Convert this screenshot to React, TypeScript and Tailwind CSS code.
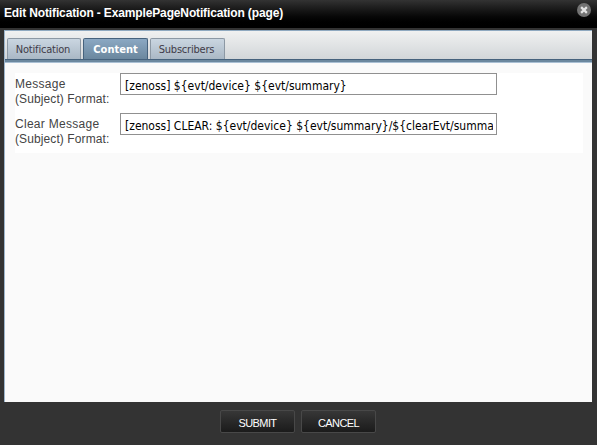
const tahoma = "font-['DejaVu_Sans_Condensed','DejaVu_Sans',sans-serif] [font-stretch:condensed]";

function Tab({ label, active = false, className }: { label: string; active?: boolean; className: string }) {
  return (
    <button
      role="tab"
      aria-selected={active}
      className={`${tahoma} flex h-[21px] items-center justify-center whitespace-nowrap rounded-t-[2px] border border-b-0 pt-px text-[11px] leading-none ${
        active
          ? "border-[#46627d] bg-linear-to-b from-[#8ba8c3] to-[#6b879e] font-bold text-white"
          : "border-[#8c98a4] bg-linear-to-b from-[#cad6e1] to-[#aab8c5] pr-[2px] tracking-[-0.2px] text-[#3f3b48]"
      } ${className}`}
    >
      {label}
    </button>
  );
}

function Field({ lines, value }: { lines: [string, string]; value: string }) {
  return (
    <label className="flex h-10 items-start">
      <span className="w-[105px] shrink-0 pt-[4px] text-[12px] leading-[15px] whitespace-nowrap text-[#444]">
        <span className="block tracking-[0.28px]">{lines[0]}</span>
        <span className="block tracking-[0.1px]">{lines[1]}</span>
      </span>
      <input
        defaultValue={value}
        className={`${tahoma} h-[22px] w-[377px] border border-[#909090] bg-white pt-[3px] pr-[3px] pl-1 text-[12px] text-black outline-none`}
      />
    </label>
  );
}

function DialogButton({ label, className }: { label: string; className: string }) {
  return (
    <button
      className={`flex h-[23px] items-center justify-center rounded-[2px] border border-[#484848] bg-linear-to-b from-[#373737] to-[#1b1b1b] pt-[4px] text-[11px] leading-none tracking-[-0.6px] text-white ${className}`}
    >
      {label}
    </button>
  );
}

export default function App() {
  return (
    <div className="flex h-[445px] w-[597px] flex-col overflow-hidden bg-[#333] font-['Liberation_Sans',Arial,sans-serif]">
      <header className="flex h-[28px] shrink-0 items-start justify-between bg-linear-to-b from-[#333] to-black pl-1 pr-[6px]">
        <h1 className="pt-[6px] text-[12px] leading-[15px] font-bold tracking-[-0.14px] whitespace-nowrap text-white">
          Edit Notification - ExamplePageNotification (page)
        </h1>
        <button aria-label="Close" className="mt-[3px]">
          <svg width="14" height="14" viewBox="0 0 14 14">
            <circle cx="7" cy="7" r="7" fill="#737373" />
            <path d="M4.9 4.9 9.1 9.1M9.1 4.9 4.9 9.1" stroke="#e4e4e4" strokeWidth="2.2" strokeLinecap="square" />
          </svg>
        </button>
      </header>
      <main className="mt-[2px] ml-1 flex h-[372px] w-[588px] shrink-0 flex-col border-t border-l border-t-[#8fa9c0] border-l-[#9cb5cc] bg-[#fafafa]">
        <div role="tablist" className="flex h-[28px] shrink-0 items-end gap-[2px] bg-linear-to-b from-[#f0f1f1] to-[#d2d6d9] pl-[2px]">
          <Tab label="Notification" className="w-[74px]" />
          <Tab label="Content" active className="w-[65px]" />
          <Tab label="Subscribers" className="w-[75px]" />
        </div>
        <div className="h-[4px] shrink-0 border-t border-b border-t-[#46627d] border-b-[#a9bfd3] bg-[#6b879e]" />
        <section className="mt-[10px] ml-[10px] h-20 w-[568px] bg-white">
          <Field lines={["Message", "(Subject) Format:"]} value="[zenoss] ${evt/device} ${evt/summary}" />
          <Field
            lines={["Clear Message", "(Subject) Format:"]}
            value="[zenoss] CLEAR: ${evt/device} ${evt/summary}/${clearEvt/summary}"
          />
        </section>
      </main>
      <footer className="flex gap-[6px] pt-[8px] pl-[220px]">
        <DialogButton label="SUBMIT" className="w-[75px]" />
        <DialogButton label="CANCEL" className="w-[75px]" />
      </footer>
    </div>
  );
}
